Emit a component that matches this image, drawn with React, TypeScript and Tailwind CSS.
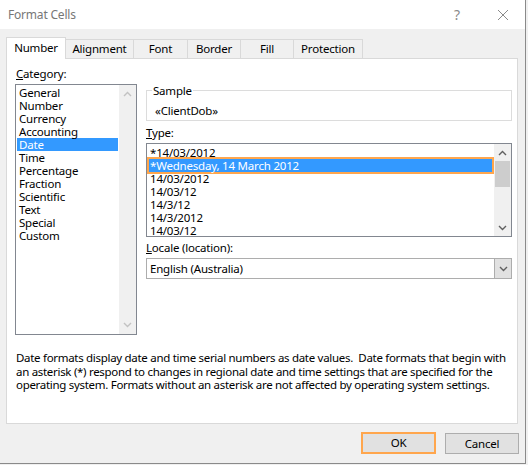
import React from "react";

const font = { fontFamily: '"Segoe UI", "Noto Sans", "Open Sans", sans-serif', letterSpacing: "-0.2px" };

function Chevron({ dir, color }: { dir: "up" | "down"; color: string }) {
  return (
    <svg width="9" height="6" viewBox="0 0 9 6">
      {dir === "up" ? (
        <path d="M1 5 L4.5 1.5 L8 5" fill="none" stroke={color} strokeWidth="1.4" />
      ) : (
        <path d="M1 1 L4.5 4.5 L8 1" fill="none" stroke={color} strokeWidth="1.4" />
      )}
    </svg>
  );
}

const categories = [
  "General",
  "Number",
  "Currency",
  "Accounting",
  "Date",
  "Time",
  "Percentage",
  "Fraction",
  "Scientific",
  "Text",
  "Special",
  "Custom",
];

const types = [
  "*14/03/2012",
  "*Wednesday, 14 March 2012",
  "14/03/2012",
  "14/03/12",
  "14/3/12",
  "14/3/2012",
  "14/03/12",
];

const tabs = ["Alignment", "Font", "Border", "Fill", "Protection"];
const tabWidths = ["w-[68px]", "w-[54px]", "w-[53px]", "w-[53px]", "w-[69px]"];

export default function App() {
  return (
    <div className="w-[528px] h-[465px] bg-[#f0f0f0] overflow-hidden text-[11.5px] text-black" style={font}>
      <div className="w-[526px] h-[464px] border-r border-b border-[#8a8a8a] bg-[#f0f0f0] flex flex-col">
        {/* Title bar */}
        <div className="h-[29px] bg-white flex items-center">
          <span className="ml-[8px] text-[12px] text-[#777777]">Format Cells</span>
          <span className="ml-auto mr-[37px] text-[14px] text-[#8a8a8a]">?</span>
          <svg width="12" height="12" viewBox="0 0 12 12" className="mr-[16px]">
            <path d="M1 1 L11 11 M11 1 L1 11" stroke="#8a8a8a" strokeWidth="1" />
          </svg>
        </div>

        {/* Tabs */}
        <div className="ml-[6px] mt-[8px] flex items-end h-[22px] relative z-10">
          <div className="w-[60px] h-[22px] bg-white border border-b-0 border-[#d9d9d9] flex items-center justify-center pb-[1px]">
            Number
          </div>
          {tabs.map((t, i) => (
            <div
              key={t}
              className={`${tabWidths[i]} h-[19px] mb-px bg-[#f0f0f0] border border-l-0 border-b-0 border-[#d9d9d9] flex items-center justify-center`}
            >
              {t}
            </div>
          ))}
        </div>

        {/* Panel */}
        <div className="ml-[6px] w-[512px] h-[366px] -mt-px bg-white border border-[#d9d9d9] flex flex-col">
          <div className="flex pl-[8px]">
            {/* Left column */}
            <div className="flex flex-col pt-[7px]">
              <div className="leading-[16px] h-[16px] mb-[2px] ml-px">
                <span className="underline">C</span>ategory:
              </div>
              <div className="w-[122px] h-[251px] border border-[#828790] bg-white flex">
                <div className="flex-1 p-px">
                  {categories.map((c) => (
                    <div
                      key={c}
                      className={`h-[13px] leading-[13px] pl-[2px] ${c === "Date" ? "bg-[#3399ff] text-white" : ""}`}
                    >
                      {c}
                    </div>
                  ))}
                </div>
                <div className="w-[17px] bg-[#f0f0f0] flex flex-col items-center justify-between py-[6px]">
                  <Chevron dir="up" color="#c2c2c2" />
                  <Chevron dir="down" color="#c2c2c2" />
                </div>
              </div>
            </div>

            {/* Right column */}
            <div className="ml-[9px] w-[366px] flex flex-col pt-[24px]">
              <fieldset className="border border-[#dcdcdc] h-[38px] px-[5px]">
                <legend className="px-px leading-[15px] text-black">Sample</legend>
                <div className="pl-[3px] leading-[15px] mt-[5px]">«ClientDob»</div>
              </fieldset>
              <div className="leading-[16px] h-[16px] mt-[4px] mb-[2px]">
                <span className="underline">T</span>ype:
              </div>
              <div className="h-[94px] border border-[#828790] bg-white flex">
                <div className="flex-1 pt-[2px]">
                  {types.map((t, i) =>
                    i === 1 ? (
                      <div key={i} className="h-[17px] border-2 border-[#ffa64d] bg-[#3399ff] text-white leading-[13px] pl-[1px] -my-[2px] relative">
                        {t}
                      </div>
                    ) : (
                      <div key={i} className="h-[13px] leading-[13px] pl-[3px]">
                        {t}
                      </div>
                    )
                  )}
                </div>
                <div className="w-[17px] bg-[#f0f0f0] flex flex-col items-center">
                  <div className="h-[17px] flex items-center justify-center">
                    <Chevron dir="up" color="#606060" />
                  </div>
                  <div className="w-[15px] h-[26px] bg-[#cdcdcd]" />
                  <div className="flex-1" />
                  <div className="h-[17px] flex items-center justify-center">
                    <Chevron dir="down" color="#606060" />
                  </div>
                </div>
              </div>
              <div className="leading-[16px] h-[16px] mt-[3px] mb-[2px]">
                <span className="underline">L</span>ocale (location):
              </div>
              <div className="h-[21px] border border-[#adadad] bg-white flex">
                <div className="flex-1 pl-[3px] leading-[19px]">English (Australia)</div>
                <div className="w-[17px] bg-[#e1e1e1] border-l border-[#adadad] flex items-center justify-center">
                  <Chevron dir="down" color="#606060" />
                </div>
              </div>
            </div>
          </div>

          <div className="mt-[16px] ml-[9px] leading-[13.5px] whitespace-nowrap tracking-[-0.3px]">
            <div>Date formats display date and time serial numbers as date values.&nbsp; Date formats that begin with</div>
            <div>an asterisk (*) respond to changes in regional date and time settings that are specified for the</div>
            <div>operating system. Formats without an asterisk are not affected by operating system settings.</div>
          </div>
        </div>

        {/* Buttons */}
        <div className="flex justify-end gap-[9px] mt-[8px] mr-[6px]">
          <div className="w-[75px] h-[22px] border-2 border-[#ffa64d] bg-[#e1e1e1] flex items-center justify-center">
            OK
          </div>
          <div className="w-[74px] h-[21px] border border-[#adadad] bg-[#e1e1e1] flex items-center justify-center mt-px">
            Cancel
          </div>
        </div>
      </div>
    </div>
  );
}
